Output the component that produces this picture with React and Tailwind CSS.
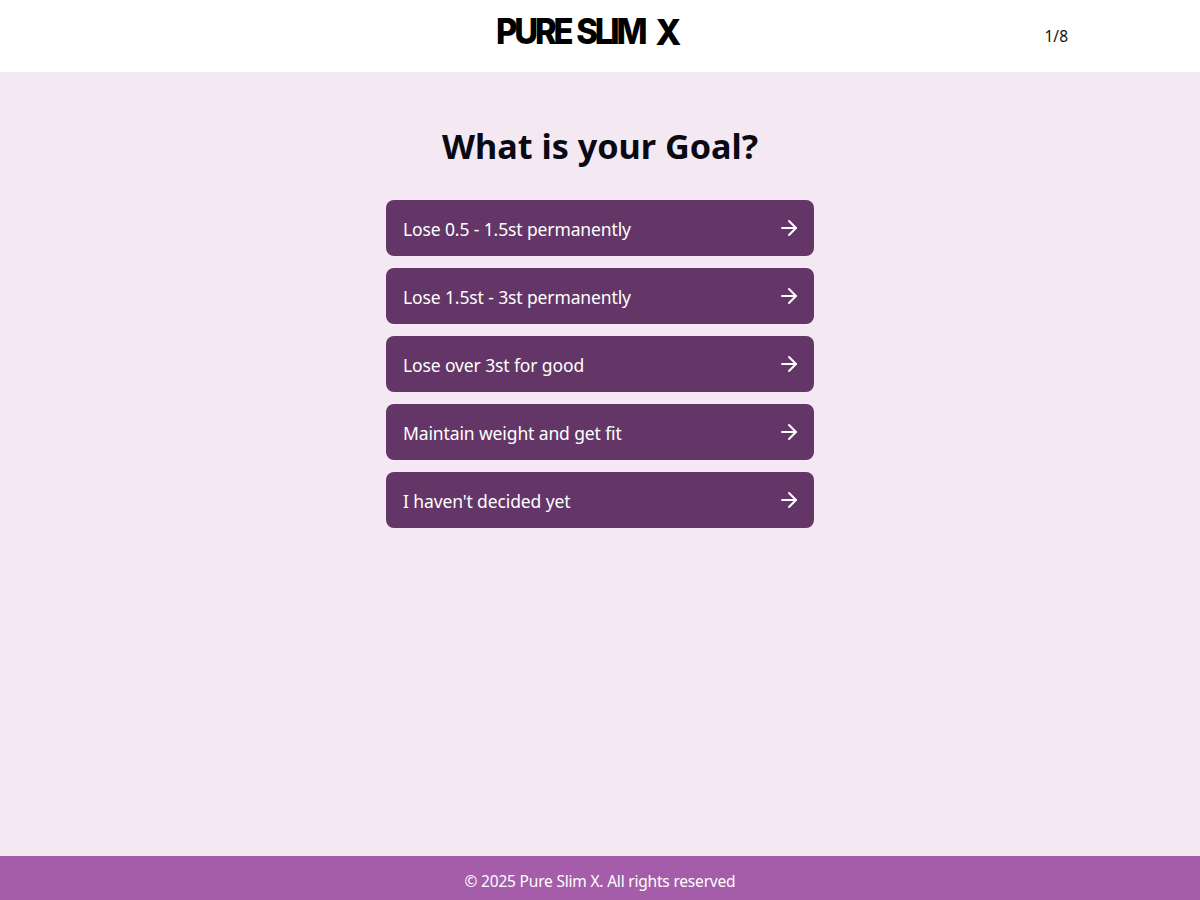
import React from "react";
import { ArrowRight } from "lucide-react";

const goals = [
  "Lose 0.5 - 1.5st permanently",
  "Lose 1.5st - 3st permanently",
  "Lose over 3st for good",
  "Maintain weight and get fit",
  "I haven't decided yet",
];

const App = () => {
  return (
    <div className="flex flex-col h-screen bg-[#f4e8f3] font-['Noto_Sans','Open_Sans',sans-serif] text-black">
      <header className="flex items-center justify-between h-[72px] bg-white pl-[496px] pr-[132px]">
        <div className="flex font-['Inter',sans-serif] font-extrabold text-[35px] leading-none whitespace-pre pb-[8px] origin-left scale-x-[0.94]">
          <span className="tracking-[-3.4px] [word-spacing:2px]">PURE SLIM</span>
          <span className="ml-[12px] text-[36px]">X</span>
        </div>
        <div className="text-[15.5px] leading-none pt-[1px] text-[#111]">1/8</div>
      </header>

      <main className="flex-1 flex flex-col items-center pt-[51px]">
        <h1 className="text-[34.2px] leading-[46px] font-bold mb-[31px] text-[#0a0a14]">
          What is your Goal?
        </h1>
        <div className="flex flex-col gap-3 w-[428px]">
          {goals.map((goal) => (
            <button
              key={goal}
              className="flex items-center justify-between h-14 pl-[17px] pr-[13px] rounded-lg bg-[#643667] text-white text-[17.5px] tracking-[-0.12px] text-left"
            >
              <span className="pt-[3px]">{goal}</span>
              <ArrowRight size={24} strokeWidth={2} />
            </button>
          ))}
        </div>
      </main>

      <footer className="flex items-center justify-center h-11 bg-[#a55ca9] text-white text-[15.5px] tracking-[-0.2px]">
        <span className="pt-[7px]">© 2025 Pure Slim X. All rights reserved</span>
      </footer>
    </div>
  );
};

export default App;
